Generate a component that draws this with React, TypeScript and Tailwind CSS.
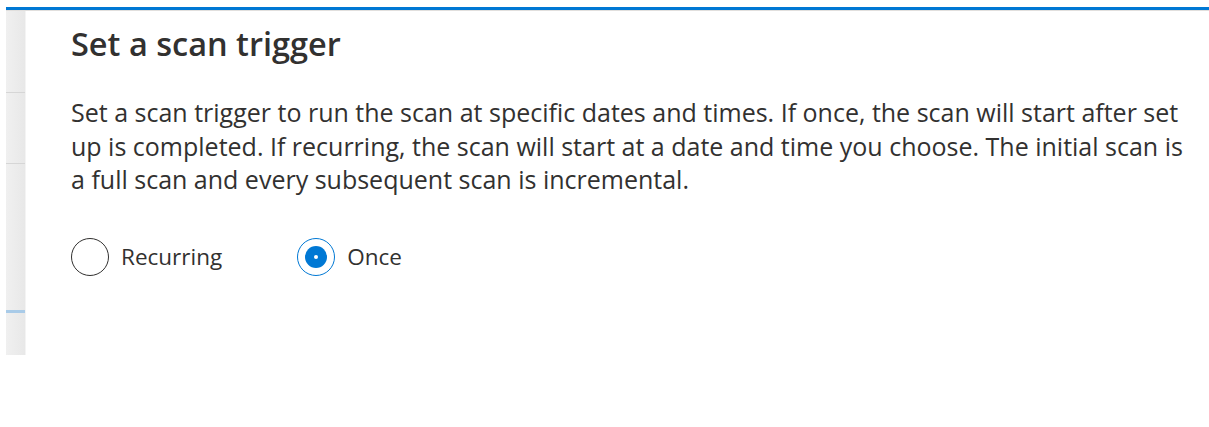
import { useState } from 'react';

const font = { fontFamily: '"Open Sans", "Noto Sans", sans-serif' };

function Radio({ label, checked, onClick }: { label: string; checked: boolean; onClick: () => void }) {
  return (
    <button onClick={onClick} className="flex items-center gap-[12px] cursor-pointer">
      {checked ? (
        <span className="w-[38px] h-[38px] rounded-full border border-[#0078d4] flex items-center justify-center">
          <span className="w-[22px] h-[22px] rounded-full bg-[#0078d4] flex items-center justify-center">
            <span className="w-[4px] h-[4px] rounded-full bg-white" />
          </span>
        </span>
      ) : (
        <span className="w-[38px] h-[38px] rounded-full border-[1.5px] border-[#323130]" />
      )}
      <span className="text-[22.5px] leading-[30px] text-[#323130]">{label}</span>
    </button>
  );
}

export default function App() {
  const [mode, setMode] = useState<'recurring' | 'once'>('once');

  return (
    <div className="w-[1209px] h-[427px] bg-white pt-[7px] pl-[6px]" style={font}>
      <div className="border-t-[3px] border-[#0078d4]">
        <div className="h-px bg-[#e1dfdd]" />
        <div className="flex">
          <div className="w-[20px] h-[344px] bg-gradient-to-r from-[#f0f0f0] to-[#e8e8e8] border-r border-[#f4f4f4] flex flex-col">
            <div className="h-[81px]" />
            <div className="h-px bg-[#d6d6d6]" />
            <div className="h-[70px]" />
            <div className="h-px bg-[#d6d6d6]" />
            <div className="h-[146px]" />
            <div className="h-[3px] bg-[#a9cbe8]" />
          </div>
          <div className="pl-[45px] pt-[13px] flex-1">
            <h2 className="text-[32.5px] font-semibold text-[#323130] leading-[40px]">Set a scan trigger</h2>
            <p className="mt-[32px] w-[1130px] text-[25px] leading-[33.5px] text-[#323130]">
              Set a scan trigger to run the scan at specific dates and times. If once, the scan will start after set
              <br />
              up is completed. If recurring, the scan will start at a date and time you choose. The initial scan is
              <br />
              a full scan and every subsequent scan is incremental.
            </p>
            <div className="mt-[41px] flex gap-[75px]">
              <Radio label="Recurring" checked={mode === 'recurring'} onClick={() => setMode('recurring')} />
              <Radio label="Once" checked={mode === 'once'} onClick={() => setMode('once')} />
            </div>
          </div>
        </div>
      </div>
    </div>
  );
}
